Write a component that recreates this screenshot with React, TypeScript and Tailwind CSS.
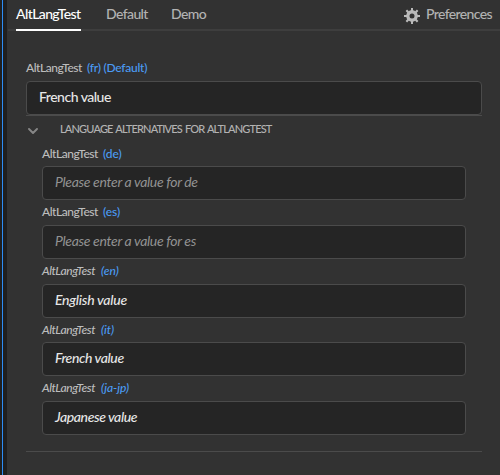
type TextProps = { children: string; className: string };

const rows = [
  { lang: "(de)", text: "Please enter a value for de", track: "tracking-[-0.32px]", filled: false, h: "h-[58px]" },
  { lang: "(es)", text: "Please enter a value for es", track: "tracking-[-0.32px]", filled: false, h: "h-[59px]" },
  { lang: "(en)", text: "English value", track: "tracking-[-0.25px]", filled: true, h: "h-[59px]" },
  { lang: "(it)", text: "French value", track: "tracking-[-0.38px]", filled: true, h: "h-[58px]" },
  { lang: "(ja-jp)", text: "Japanese value", track: "tracking-[-0.4px]", filled: true, h: "h-[59px]" },
];

function Text({ children, className }: TextProps) {
  return <span className={`whitespace-pre ${className}`}>{children}</span>;
}

function Gear() {
  return (
    <svg width="16" height="16" viewBox="0 0 16 16" fill="#b9b9b9">
      <path
        fillRule="evenodd"
        d="M7 0h2v2.300a5.800 5.800 0 0 1 2.200.9L12.900 1.600 14.400 3.100 12.800 4.800a5.800 5.800 0 0 1 .9 2.200H16v2h-2.300a5.800 5.800 0 0 1-.9 2.200l1.600 1.700-1.500 1.500-1.700-1.600a5.800 5.800 0 0 1-2.200.9V16H7v-2.300a5.800 5.800 0 0 1-2.200-.9l-1.700 1.600-1.500-1.500 1.600-1.700a5.800 5.800 0 0 1-.9-2.200H0V7h2.300a5.800 5.800 0 0 1 .9-2.200L1.600 3.100 3.100 1.600l1.700 1.600A5.800 5.800 0 0 1 7 2.300zM8 5.500a2.500 2.500 0 1 0 0 5 2.500 2.500 0 0 0 0-5z"
      />
    </svg>
  );
}

export default function App() {
  return (
    <div className="flex h-[475px] w-[500px] overflow-hidden bg-[#1f1f1f] font-['Lato','Noto_Sans',sans-serif]">
      <div className="mr-1 h-full w-[3px] shrink-0 border-r border-[#2d8cf4] bg-[#1f1f1f]" />
      <main className="flex min-w-0 flex-1 flex-col bg-[#323232]">
        <nav className="ml-px flex h-[31px] shrink-0 border-b-2 border-[#3e3e3e] pl-2 text-[14px] leading-[28px] text-[#b3b3b3]">
          <div className="-mb-0.5 mr-[25px] h-[31px] w-[65px] border-b-2 border-white text-white">
            <Text className="font-medium tracking-[-0.6px]">AltLangTest</Text>
          </div>
          <div className="w-[65px]"><Text className="font-medium tracking-[-0.6px]">Default</Text></div>
          <div><Text className="font-medium tracking-[-0.6px]">Demo</Text></div>
          <div className="ml-auto mr-2 flex gap-1.5">
            <div className="mt-2"><Gear /></div>
            <div className="w-[66px]"><Text className="font-medium tracking-[-0.62px]">Preferences</Text></div>
          </div>
        </nav>
        <section className="ml-[19px] mr-[18px] mt-[28px] flex flex-col">
          <div className="flex h-[22px] text-[12px] font-medium leading-[18px] text-[#bdbdbd]">
            <div className="w-[61px]"><Text className="tracking-[-0.45px]">AltLangTest</Text></div>
            <Text className="tracking-[-0.24px] text-[#4b9cf5]">(fr) (Default)</Text>
          </div>
          <div className="h-[35px] border-b border-[#4b4b4b]">
            <div className="flex h-[34px] items-center rounded-[4px] border border-[#4b4b4b] bg-[#252525] pb-[3px] pl-3 text-[14px] font-medium text-[#e7e7e7]">
              <Text className="tracking-[-0.5px]">French value</Text>
            </div>
          </div>
          <div className="flex h-[26px] items-center text-[11px] font-medium text-[#b3b3b3]">
            <svg className="ml-[2px] mr-[22px] mt-1" width="10" height="6" viewBox="0 0 10 6" fill="none" stroke="#868686" strokeWidth="1.900" strokeLinecap="round" strokeLinejoin="round"><path d="M1 1l4 4 4-4" /></svg>
            <Text className="tracking-[-0.82px] [word-spacing:1px]">LANGUAGE ALTERNATIVES FOR ALTLANGTEST</Text>
          </div>
          <div className="mx-4 flex flex-col">
            {rows.map((r) => (
              <div key={r.lang} className={`flex flex-col ${r.h} ${r.filled ? "italic" : ""}`}>
                <div className="flex min-h-0 flex-1 text-[12px] font-medium leading-[24px] text-[#bdbdbd]">
                  <div className={r.filled ? "w-[59px]" : "w-[61px]"}><Text className={r.filled ? "tracking-[-0.4px]" : "tracking-[-0.45px]"}>AltLangTest</Text></div>
                  <Text className="tracking-[-0.05px] text-[#4b9cf5]">{r.lang}</Text>
                </div>
                <div className={`flex h-[34px] shrink-0 items-center rounded-[4px] border border-[#4b4b4b] bg-[#252525] pb-[3px] pl-3 text-[14px] italic ${r.filled ? "font-medium text-[#e7e7e7]" : "font-normal text-[#929292]"}`}>
                  <Text className={r.track}>{r.text}</Text>
                </div>
              </div>
            ))}
          </div>
          <div className="mt-4 h-px bg-[#4b4b4b]" />
        </section>
      </main>
    </div>
  );
}
